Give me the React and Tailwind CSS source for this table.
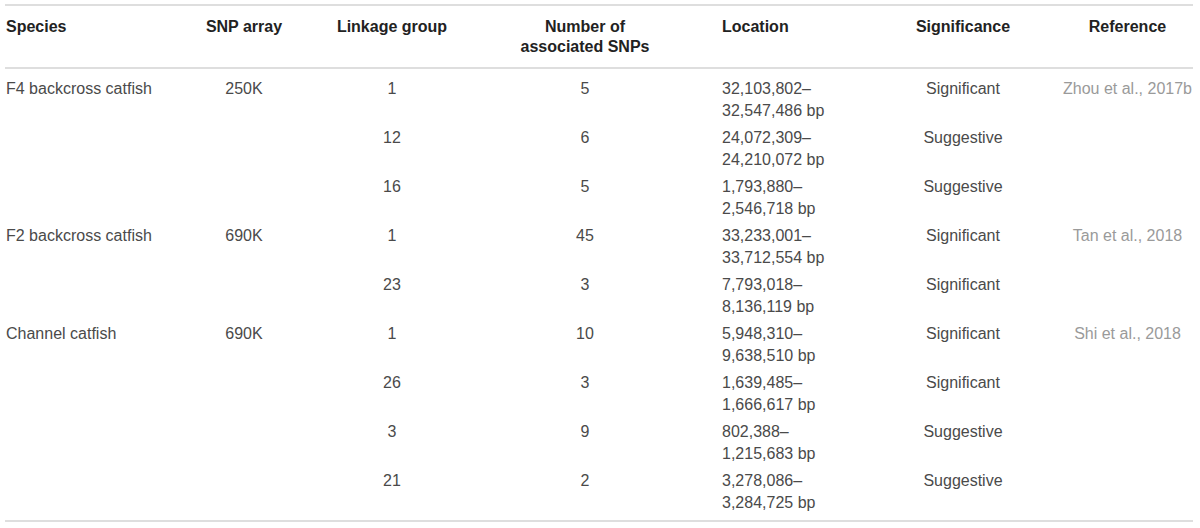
import React from 'react';

const rows = [
  { species: 'F4 backcross catfish', array: '250K', group: '1', snps: '5', loc: ['32,103,802–', '32,547,486 bp'], sig: 'Significant', ref: 'Zhou et al., 2017b' },
  { group: '12', snps: '6', loc: ['24,072,309–', '24,210,072 bp'], sig: 'Suggestive' },
  { group: '16', snps: '5', loc: ['1,793,880–', '2,546,718 bp'], sig: 'Suggestive' },
  { species: 'F2 backcross catfish', array: '690K', group: '1', snps: '45', loc: ['33,233,001–', '33,712,554 bp'], sig: 'Significant', ref: 'Tan et al., 2018' },
  { group: '23', snps: '3', loc: ['7,793,018–', '8,136,119 bp'], sig: 'Significant' },
  { species: 'Channel catfish', array: '690K', group: '1', snps: '10', loc: ['5,948,310–', '9,638,510 bp'], sig: 'Significant', ref: 'Shi et al., 2018' },
  { group: '26', snps: '3', loc: ['1,639,485–', '1,666,617 bp'], sig: 'Significant' },
  { group: '3', snps: '9', loc: ['802,388–', '1,215,683 bp'], sig: 'Suggestive' },
  { group: '21', snps: '2', loc: ['3,278,086–', '3,284,725 bp'], sig: 'Suggestive' },
];

const cols = 'grid grid-cols-[180px_118px_178px_208px_187px_174px_143px]';

const App = () => {
  return (
    <div className="w-[1200px] h-[528px] bg-white pt-[4px] px-[5px] font-['Liberation_Sans',Arial,sans-serif] text-[16px]">
      <div className="w-[1188px] border-t-2 border-b-2 border-[#dedede]">
        {/* Header */}
        <div className={`${cols} pt-[11px] pb-[10px] border-b-2 border-[#dedede] font-bold text-[#222] leading-[20px]`}>
          <div className="pl-[1px]">Species</div>
          <div className="text-center">SNP array</div>
          <div className="text-center">Linkage group</div>
          <div className="text-center">Number of<br />associated SNPs</div>
          <div className="pl-[33px]">Location</div>
          <div className="text-center">Significance</div>
          <div className="pl-[12px] text-center">Reference</div>
        </div>

        {/* Body */}
        <div className="pt-[6px] pb-[4px] text-[#4a4a4a] leading-[22px]">
          {rows.map((r, i) => (
            <div key={i} className={`${cols} h-[49px] pt-[3px]`}>
              <div className="pl-[1px]">{r.species}</div>
              <div className="text-center">{r.array}</div>
              <div className="text-center">{r.group}</div>
              <div className="text-center">{r.snps}</div>
              <div className="pl-[33px]">
                {r.loc[0]}
                <br />
                {r.loc[1]}
              </div>
              <div className="text-center">{r.sig}</div>
              <div className="pl-[12px] text-center text-[#9a9a9a] whitespace-nowrap">{r.ref}</div>
            </div>
          ))}
        </div>
      </div>
    </div>
  );
};

export default App;
